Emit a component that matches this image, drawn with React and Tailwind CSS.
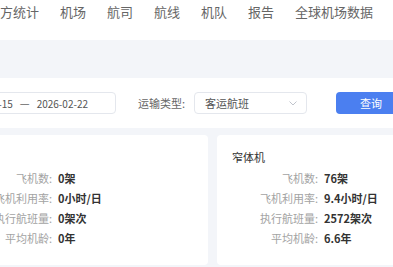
const navItems = ["地方统计", "机场", "航司", "航线", "机队", "报告", "全球机场数据"];

const cards = [
  {
    title: "宽体机",
    rows: [
      ["飞机数:", "0架"],
      ["飞机利用率:", "0小时/日"],
      ["执行航班量:", "0架次"],
      ["平均机龄:", "0年"],
    ],
  },
  {
    title: "窄体机",
    rows: [
      ["飞机数:", "76架"],
      ["飞机利用率:", "9.4小时/日"],
      ["执行航班量:", "2572架次"],
      ["平均机龄:", "6.6年"],
    ],
  },
];

const FleetCard = ({ title, rows }) => (
  <div className="h-[130px] w-[257px] shrink-0 rounded bg-white px-[15px] pt-[14px]">
    <div className="text-[11px] leading-[16px] text-[#333]">{title}</div>
    <div className="mt-[3px] flex flex-col">
      {rows.map(([label, value]) => (
        <div key={label} className="flex h-[20px] items-center text-[11px]">
          <span className="w-[86px] text-right text-[#a3a3a3]">{label}</span>
          <span className="ml-[6px] font-bold text-[#333]">{value}</span>
        </div>
      ))}
    </div>
  </div>
);

export default function App() {
  return (
    <div
      className="h-[267px] w-[393px] overflow-hidden bg-[#f3f5f9]"
      style={{ fontFamily: '"Noto Sans CJK SC", "Liberation Sans", sans-serif' }}
    >
      <nav className="flex h-[40px] items-start gap-[21px] bg-white pt-[2px] text-[13px] leading-[19px] text-[#666]">
        {navItems.map((item, i) => (
          <span key={item} className={i === 0 ? "-ml-[13px] whitespace-nowrap" : "whitespace-nowrap"}>
            {item}
          </span>
        ))}
      </nav>

      <div className="h-[38px]" />

      <div className="flex h-[50px] items-center bg-white text-[11px]">
        <div className="-ml-[100px] flex h-[22px] w-[216px] shrink-0 items-center justify-end gap-[7px] rounded border border-[#e4e7ed] pr-[27px] text-[10px] text-[#555]">
          <span>2026-02-15</span>
          <span className="text-[11px] text-[#666]">—</span>
          <span>2026-02-22</span>
        </div>
        <span className="ml-[22px] whitespace-nowrap text-[#666]">运输类型:</span>
        <div className="ml-[9px] flex h-[22px] w-[113px] shrink-0 items-center justify-between rounded border border-[#e4e7ed] pl-[10px] pr-[9px] text-[#555]">
          <span>客运航班</span>
          <svg width="8" height="5" viewBox="0 0 8 5" fill="none" stroke="#c0c4cc" strokeWidth="1">
            <path d="M0.5 0.5 L4 4 L7.5 0.5" />
          </svg>
        </div>
        <button className="ml-[29px] flex h-[22px] w-[70px] shrink-0 items-center justify-center rounded bg-[#4b7ff0] text-white">
          查询
        </button>
      </div>

      <div className="-ml-[49px] mt-[7px] flex gap-[9px]">
        {cards.map((c) => (
          <FleetCard key={c.title} {...c} />
        ))}
      </div>
    </div>
  );
}
